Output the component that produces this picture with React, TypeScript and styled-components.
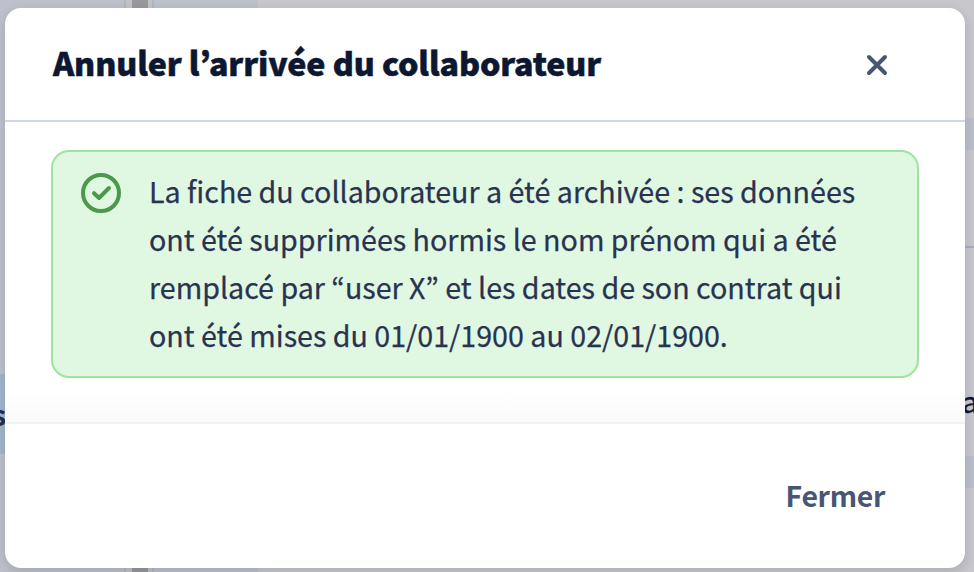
import React from "react";
import styled, { createGlobalStyle } from "styled-components";

const GlobalStyle = createGlobalStyle`
  * { box-sizing: border-box; }
  body { margin: 0; overflow: hidden; font-family: "Noto Sans CJK KR", "Noto Sans CJK SC", sans-serif; }
`;

const Screen = styled.div`
  position: relative;
  width: 974px;
  height: 572px;
  padding: 8px 9px 4px 5px;
  overflow: hidden;
  background: #c7c7cc;
`;

const Backdrop = styled.div`
  position: absolute;
  inset: 0;
  display: grid;
  grid-template-columns: 124px 2px 6px 16px 4px 2px 104px 1fr;
`;

const Strip = styled.div<{ $color: string }>`
  background: ${(p) => p.$color};
`;

const SidePanel = styled(Strip)`
  padding-top: 374px;
`;

const ActiveItem = styled.div`
  height: 80px;
  background: #a2b6ca;
  color: #222e4d;
  font-size: 28.65px;
  font-weight: 700;
  line-height: 80px;
  text-indent: -8px;
`;

const Content = styled.div`
  display: grid;
  grid-template-rows: 118px 32px 96px 2px 208px 32px 1fr;
`;

const Band = styled.div<{ $color?: string }>`
  background: ${(p) => p.$color ?? "transparent"};
`;

const Cell = styled(Band)`
  display: flex;
  align-items: flex-end;
  justify-content: flex-end;
  padding-bottom: 35px;
  color: #0d1730;
  font-size: 28.65px;
  line-height: 40px;
  -webkit-text-stroke: 0.4px currentColor;
`;

const CellText = styled.span`
  margin-right: -4px;
`;

const Dialog = styled.section`
  position: relative;
  display: flex;
  flex-direction: column;
  height: 560px;
  border-radius: 16px;
  overflow: hidden;
  background: #fff;
  box-shadow: 0 4px 12px rgba(20, 30, 60, 0.16);
`;

const Header = styled.header`
  display: flex;
  flex: 0 0 114px;
  align-items: center;
  justify-content: space-between;
  padding: 0 77px 0 48px;
  border-bottom: 2px solid #cdd7ea;
`;

const Title = styled.h1`
  margin: 0 0 4px;
  color: #0c1731;
  font-size: 32.2px;
  font-weight: 900;
  line-height: 48px;
  letter-spacing: -0.12px;
  white-space: nowrap;
  -webkit-text-stroke: 0.5px currentColor;
`;

const IconButton = styled.button`
  display: flex;
  margin-top: 2px;
  padding: 0;
  border: 0;
  background: none;
  color: #475672;
`;

const Body = styled.div`
  flex: 0 0 300px;
  padding: 28px 46px 0;
  background: linear-gradient(#fff 270px, #fafafa 300px);
`;

const Alert = styled.div`
  display: flex;
  gap: 28px;
  height: 228px;
  padding: 15px 28px 0;
  border: 2px solid #9be59c;
  border-radius: 18px;
  background: #e0f8e2;
`;

const CheckIcon = styled.svg`
  flex: none;
  margin-top: 6px;
`;

const Message = styled.p`
  margin: 0;
  color: #2a3251;
  font-size: 28.65px;
  line-height: 48px;
  white-space: nowrap;
  -webkit-text-stroke: 0.25px currentColor;
`;

const Line = styled.span`
  display: block;
`;

const Footer = styled.footer`
  flex: 1;
  display: flex;
  justify-content: flex-end;
  align-items: center;
  padding: 0 80px 2px 0;
  border-top: 2px solid #f1f1f1;
`;

const CloseButton = styled.button`
  padding: 0;
  border: 0;
  background: none;
  color: #475672;
  font: 700 28.4px/48px "Noto Sans CJK KR", sans-serif;
  letter-spacing: -0.3px;
`;

const lines = [
  "La fiche du collaborateur a été archivée : ses données",
  "ont été supprimées hormis le nom prénom qui a été",
  "remplacé par “user X” et les dates de son contrat qui",
  "ont été mises du 01/01/1900 au 02/01/1900.",
];

export default function App() {
  return (
    <Screen>
      <GlobalStyle />
      <Backdrop aria-hidden="true">
        <SidePanel $color="#bec1cb">
          <ActiveItem>s</ActiveItem>
        </SidePanel>
        <Strip $color="#b5b6bc" />
        <Strip $color="#c3c3c6" />
        <Strip $color="#98989d" />
        <Strip $color="#c3c3c6" />
        <Strip $color="#b5b6bc" />
        <Strip $color="#bdc1cb" />
        <Content>
          <Band />
          <Band $color="#bcbfcb" />
          <Band />
          <Band $color="#a4adc3" />
          <Cell><CellText>a</CellText></Cell>
          <Band $color="#bcbfcb" />
          <Band />
        </Content>
      </Backdrop>
      <Dialog role="dialog" aria-labelledby="dialog-title">
        <Header>
          <Title id="dialog-title">Annuler l’arrivée du collaborateur</Title>
          <IconButton aria-label="Fermer la fenêtre">
            <svg width="22" height="22" viewBox="0 0 22 22" fill="none" stroke="currentColor" strokeWidth="4" strokeLinecap="round">
              <path d="M3 3 19 19M19 3 3 19" />
            </svg>
          </IconButton>
        </Header>
        <Body>
          <Alert>
            <CheckIcon width="40" height="40" viewBox="0 0 40 40" fill="none" stroke="#4b9a4c" strokeWidth="4" strokeLinecap="round" strokeLinejoin="round">
              <circle cx="20" cy="20" r="18" />
              <path d="M13 20.2 18 25 28 15" />
            </CheckIcon>
            <Message>
              {lines.map((line) => (
                <Line key={line}>{line}</Line>
              ))}
            </Message>
          </Alert>
        </Body>
        <Footer>
          <CloseButton>Fermer</CloseButton>
        </Footer>
      </Dialog>
    </Screen>
  );
}
